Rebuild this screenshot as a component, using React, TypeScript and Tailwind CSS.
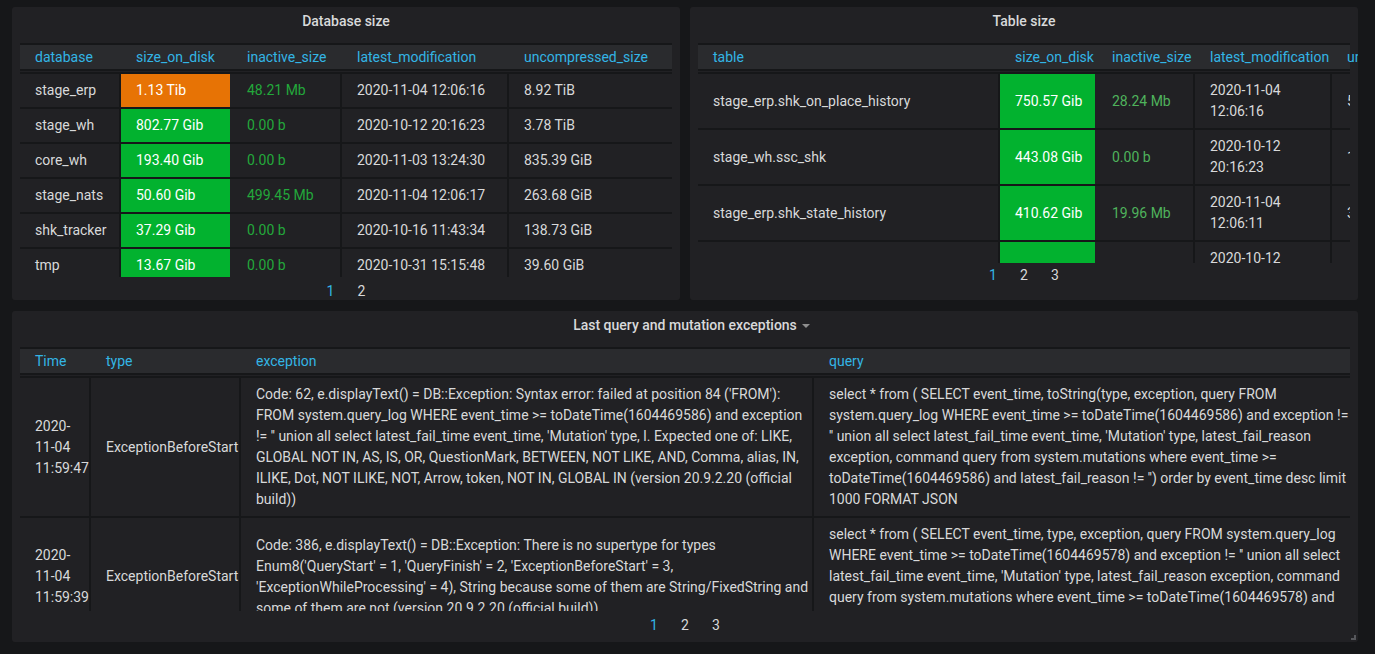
import React from 'react';

type Cell = { text: React.ReactNode; tone?: 'orange' | 'green' | 'ok' | 'okSoft'; border?: boolean };

const dbRows: string[][] = [
  ['stage_erp', '1.13 Tib', '48.21 Mb', '2020-11-04 12:06:16', '8.92 TiB'],
  ['stage_wh', '802.77 Gib', '0.00 b', '2020-10-12 20:16:23', '3.78 TiB'],
  ['core_wh', '193.40 Gib', '0.00 b', '2020-11-03 13:24:30', '835.39 GiB'],
  ['stage_nats', '50.60 Gib', '499.45 Mb', '2020-11-04 12:06:17', '263.68 GiB'],
  ['shk_tracker', '37.29 Gib', '0.00 b', '2020-10-16 11:43:34', '138.73 GiB'],
  ['tmp', '13.67 Gib', '0.00 b', '2020-10-31 15:15:48', '39.60 GiB'],
];

const tableRows: string[][] = [
  ['stage_erp.shk_on_place_history', '750.57 Gib', '28.24 Mb', '2020-11-04 12:06:16', '5.42 TiB'],
  ['stage_wh.ssc_shk', '443.08 Gib', '0.00 b', '2020-10-12 20:16:23', '1.98 TiB'],
  ['stage_erp.shk_state_history', '410.62 Gib', '19.96 Mb', '2020-11-04 12:06:11', '3.14 TiB'],
  ['stage_wh.shk_tracker_log', '252.65 Gib', '0.00 b', '2020-10-12 20:16:23', '1.27 TiB'],
];

const exceptions = [
  {
    time: ['2020-', '11-04', '11:59:47'],
    type: 'ExceptionBeforeStart',
    exception: [
      "Code: 62, e.displayText() = DB::Exception: Syntax error: failed at position 84 ('FROM'):",
      'FROM system.query_log WHERE event_time >= toDateTime(1604469586) and exception',
      "!= '' union all select latest_fail_time event_time, 'Mutation' type, l. Expected one of: LIKE,",
      'GLOBAL NOT IN, AS, IS, OR, QuestionMark, BETWEEN, NOT LIKE, AND, Comma, alias, IN,',
      'ILIKE, Dot, NOT ILIKE, NOT, Arrow, token, NOT IN, GLOBAL IN (version 20.9.2.20 (official',
      'build))',
    ],
    query: [
      'select * from ( SELECT event_time, toString(type, exception, query FROM',
      'system.query_log WHERE event_time >= toDateTime(1604469586) and exception !=',
      "'' union all select latest_fail_time event_time, 'Mutation' type, latest_fail_reason",
      'exception, command query from system.mutations where event_time >=',
      "toDateTime(1604469586) and latest_fail_reason != '') order by event_time desc limit",
      '1000 FORMAT JSON',
    ],
  },
  {
    time: ['2020-', '11-04', '11:59:39'],
    type: 'ExceptionBeforeStart',
    exception: [
      'Code: 386, e.displayText() = DB::Exception: There is no supertype for types',
      "Enum8('QueryStart' = 1, 'QueryFinish' = 2, 'ExceptionBeforeStart' = 3,",
      "'ExceptionWhileProcessing' = 4), String because some of them are String/FixedString and",
      'some of them are not (version 20.9.2.20 (official build))',
    ],
    query: [
      'select * from ( SELECT event_time, type, exception, query FROM system.query_log',
      "WHERE event_time >= toDateTime(1604469578) and exception != '' union all select",
      "latest_fail_time event_time, 'Mutation' type, latest_fail_reason exception, command",
      'query from system.mutations where event_time >= toDateTime(1604469578) and',
      "latest_fail_reason != '') order by event_time desc limit 1000 FORMAT JSON",
    ],
  },
];

const Panel: React.FC<{ title: string; caret?: boolean; className: string; children: React.ReactNode }> = ({
  title,
  caret,
  className,
  children,
}) => (
  <div className={`relative flex shrink-0 flex-col overflow-hidden rounded-[3px] bg-[#212124] ${className}`}>
    <div className="flex h-[36px] shrink-0 justify-center pt-[4px]">
      <div className="relative text-[14px] font-medium leading-[21px] text-[#d8d9da]">
        {title}
        {caret && (
          <span className="absolute left-full top-[9px] ml-[5px] h-0 w-0 border-x-[4px] border-t-[4px] border-x-transparent border-t-[#8e8e8e]" />
        )}
      </div>
    </div>
    <div className="shrink-0 px-[8px]">{children}</div>
  </div>
);

const Pager: React.FC<{ count: number; className: string }> = ({ count, className }) => (
  <div className={`flex justify-center text-[14px] leading-[21px] ${className}`}>
    {Array.from({ length: count }, (_, i) => (
      <span key={i} className={`w-[31px] text-center ${i === 0 ? 'text-[#33b5e5]' : 'text-[#d8d9da]'}`}>
        {i + 1}
      </span>
    ))}
  </div>
);

const toneClass = (tone?: Cell['tone']) => {
  if (tone === 'orange') return 'bg-[#e77305] text-white border-transparent bg-clip-padding';
  if (tone === 'green') return 'bg-[#02b22f] text-white border-transparent bg-clip-padding';
  if (tone === 'ok') return 'text-[#23a83b] border-[#161719]';
  if (tone === 'okSoft') return 'text-[#4fb35c] border-[#161719]';
  return 'text-[#d8d9da] border-[#161719]';
};

const Row: React.FC<{ grid: string; cells: Cell[] }> = ({ grid, cells }) => (
  <div className={`grid ${grid} border-t-2 border-[#161719]`}>
    {cells.map((c, i) => (
      <div
        key={i}
        className={`flex items-center py-[6px] pl-[15px] text-[14px] leading-[21px] ${toneClass(c.tone)} ${
          c.border ? 'border-r-2' : ''
        }`}
      >
        <div>{c.text}</div>
      </div>
    ))}
  </div>
);

const Header: React.FC<{ grid: string; cols: string[] }> = ({ grid, cols }) => (
  <div className={`grid ${grid} border-y-2 border-[#161719] bg-[#2a2b2e]`}>
    {cols.map((c) => (
      <div key={c} className="whitespace-nowrap pl-[15px] text-[14px] leading-[24px] text-[#33b5e5]">
        {c}
      </div>
    ))}
  </div>
);

const sizeTone = (v: string): Cell['tone'] => (v.includes('Tib') ? 'orange' : 'green');

export default function App() {
  const dbGrid = 'grid-cols-[101px_111px_110px_167px_163px]';
  const tGrid = 'grid-cols-[302px_97px_98px_137px_18px]';
  const eGrid = 'grid-cols-[71px_150px_573px_536px]';

  return (
    <div className="h-[654px] overflow-hidden bg-[#161719] pl-[12px] pt-[7px] font-[Roboto,Arial,sans-serif]">
      <div className="flex gap-[10px]">
        <Panel title="Database size" className="h-[293px] w-[668px]">
          <Header grid={dbGrid} cols={['database', 'size_on_disk', 'inactive_size', 'latest_modification', 'uncompressed_size']} />
          <div className="h-[206px] overflow-hidden pt-px">
            {dbRows.map((r) => (
              <Row
                key={r[0]}
                grid={dbGrid}
                cells={[
                  { text: r[0], border: true },
                  { text: r[1], tone: sizeTone(r[1]), border: true },
                  { text: r[2], tone: 'ok', border: true },
                  { text: r[3], border: true },
                  { text: r[4] },
                ]}
              />
            ))}
          </div>
          <Pager count={2} className="pt-[4px]" />
        </Panel>

        <Panel title="Table size" className="h-[293px] w-[668px]">
          <Header grid={tGrid} cols={['table', 'size_on_disk', 'inactive_size', 'latest_modification', 'uncompressed_size']} />
          <div className="h-[192px] overflow-hidden pt-px">
            {tableRows.map((r) => (
              <Row
                key={r[0]}
                grid={tGrid}
                cells={[
                  { text: r[0], border: true },
                  { text: r[1], tone: 'green', border: true },
                  { text: r[2], tone: 'okSoft', border: true },
                  { text: r[3], border: true },
                  { text: <span className="whitespace-nowrap">{r[4]}</span> },
                ]}
              />
            ))}
          </div>
          <Pager count={3} className="pt-[2px]" />
        </Panel>
      </div>

      <Panel title="Last query and mutation exceptions" caret className="mt-[11px] h-[331px] w-[1346px]">
        <Header grid={eGrid} cols={['Time', 'type', 'exception', 'query']} />
        <div className="h-[236px] overflow-hidden pt-px">
          {exceptions.map((e) => (
            <Row
              key={e.time[2]}
              grid={eGrid}
              cells={[
                { text: e.time.map((t) => <div key={t} className="whitespace-nowrap">{t}</div>), border: true },
                { text: <span className="whitespace-nowrap">{e.type}</span>, border: true },
                { text: e.exception.map((l, i) => <div key={i} className="whitespace-pre">{l}</div>), border: true },
                { text: e.query.map((l, i) => <div key={i} className="whitespace-pre">{l}</div>) },
              ]}
            />
          ))}
        </div>
        <Pager count={3} className="pt-[4px]" />
        <span className="absolute bottom-[2px] right-[2px] h-[5px] w-[5px] border-b-2 border-r-2 border-[#56575b]" />
      </Panel>
    </div>
  );
}
